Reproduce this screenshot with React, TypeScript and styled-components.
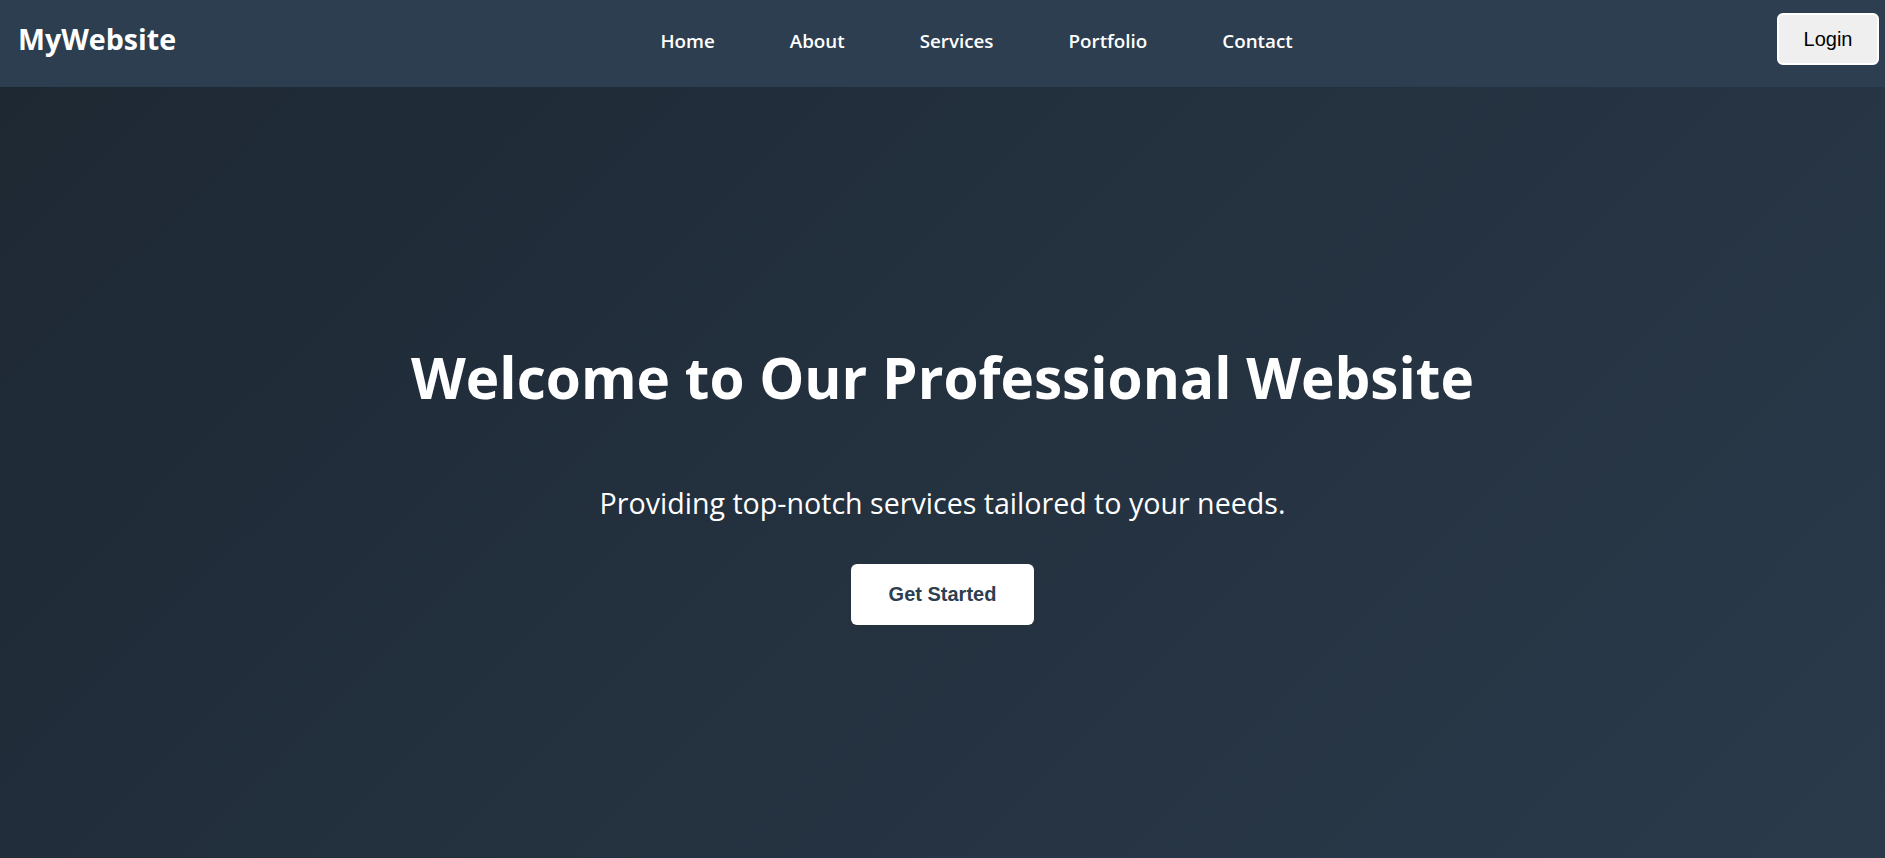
import React from "react";
import styled, { createGlobalStyle } from "styled-components";

const GlobalStyle = createGlobalStyle`
  * { box-sizing: border-box; }
  html, body { margin: 0; padding: 0; }
  body {
    font-family: "Open Sans", "Noto Sans", sans-serif;
    background: #1e2a36;
    color: #ffffff;
  }
`;

const Header = styled.header`
  height: 87px;
  background: #2c3e50;
  display: flex;
  align-items: center;
  padding: 0 6px 0 18px;
`;

const Logo = styled.div`
  font-size: 28.6px;
  font-weight: 700;
  color: #ffffff;
  line-height: 1;
  margin-top: -9px;
`;

const Nav = styled.nav`
  flex: 1;
  display: flex;
  justify-content: center;
  gap: 75px;
  margin-top: -5px;
`;

const NavLink = styled.a`
  font-size: 18.8px;
  font-weight: 600;
  color: #ffffff;
  text-decoration: none;
  line-height: 1;
  cursor: pointer;
`;

const LoginButton = styled.button`
  font-family: "Liberation Sans", Arial, sans-serif;
  font-size: 20px;
  color: #000000;
  background: #efefef;
  border: 2px solid #ffffff;
  border-radius: 6px;
  padding: 12px 24px;
  height: 52px;
  width: 102px;
  margin-top: -9px;
  cursor: pointer;
`;

const Hero = styled.section`
  height: 771px;
  background: linear-gradient(135deg, #1d2833 0%, #24313f 50%, #2a3a4b 100%);
  display: flex;
  flex-direction: column;
  align-items: center;
  padding-top: 262px;
`;

const Title = styled.h1`
  margin: 0;
  font-size: 56.7px;
  font-weight: 700;
  line-height: 1;
  color: #ffffff;
`;

const Subtitle = styled.p`
  margin: 83px 0 0;
  font-size: 28.6px;
  font-weight: 400;
  line-height: 1;
  color: #ffffff;
`;

const CtaButton = styled.button`
  margin-top: 47px;
  font-family: "Liberation Sans", Arial, sans-serif;
  font-size: 20px;
  font-weight: 700;
  color: #2c3e50;
  background: #ffffff;
  border: none;
  border-radius: 6px;
  width: 183px;
  height: 61px;
  cursor: pointer;
`;

export default function App() {
  const links = ["Home", "About", "Services", "Portfolio", "Contact"];
  return (
    <>
      <GlobalStyle />
      <Header>
        <Logo>MyWebsite</Logo>
        <Nav>
          {links.map((l) => (
            <NavLink key={l}>{l}</NavLink>
          ))}
        </Nav>
        <LoginButton>Login</LoginButton>
      </Header>
      <Hero>
        <Title>Welcome to Our Professional Website</Title>
        <Subtitle>Providing top-notch services tailored to your needs.</Subtitle>
        <CtaButton>Get Started</CtaButton>
      </Hero>
    </>
  );
}
